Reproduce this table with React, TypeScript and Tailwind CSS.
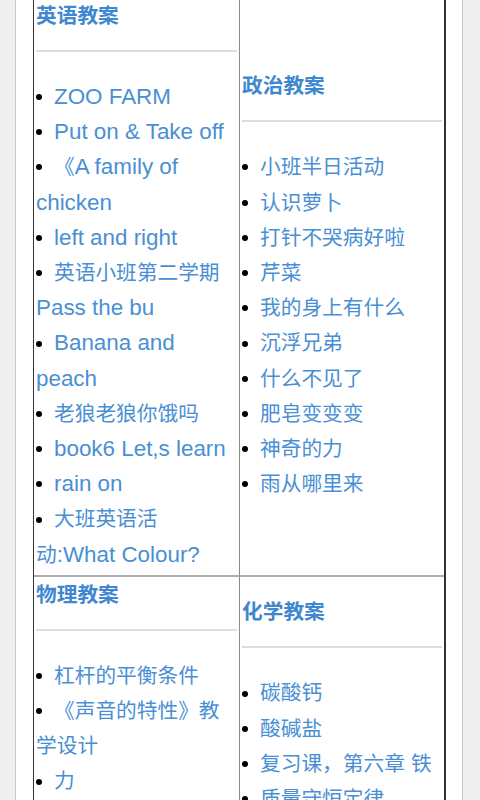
import React from "react";

const CJK = /([\u3000-\u303f\u3400-\u9fff\uff00-\uffef]+)/;

function Mixed({ text }: { text: string }) {
  return (
    <>
      {text.split(CJK).map((part, i) =>
        CJK.test(part) ? (
          <span key={i} className="text-[20.7px]">
            {part}
          </span>
        ) : (
          part
        )
      )}
    </>
  );
}

type Section = { title: string; items: string[] };

const rows: [Section, Section][] = [
  [
    {
      title: "英语教案",
      items: [
        "ZOO FARM",
        "Put on & Take off",
        "《A family of chicken",
        "left and right",
        "英语小班第二学期 Pass the bu",
        "Banana and peach",
        "老狼老狼你饿吗",
        "book6 Let,s learn",
        "rain on",
        "大班英语活动:What Colour?",
      ],
    },
    {
      title: "政治教案",
      items: [
        "小班半日活动",
        "认识萝卜",
        "打针不哭病好啦",
        "芹菜",
        "我的身上有什么",
        "沉浮兄弟",
        "什么不见了",
        "肥皂变变变",
        "神奇的力",
        "雨从哪里来",
      ],
    },
  ],
  [
    {
      title: "物理教案",
      items: ["杠杆的平衡条件", "《声音的特性》教学设计", "力", "光的反射", "浮力"],
    },
    {
      title: "化学教案",
      items: ["碳酸钙", "酸碱盐", "复习课，第六章 铁", "质量守恒定律", "溶液"],
    },
  ],
];

function Cell({ section, left, last }: { section: Section; left: boolean; last: boolean }) {
  return (
    <div
      className={`flex flex-col justify-center px-[2px] pt-[3px] pb-[3px] ${
        left ? "border-r border-[#8a8a8a]" : ""
      } ${last ? "" : "border-b-2 border-b-[#adadad]"}`}
    >
      <h3 className="mt-[2px] mb-[21px] text-[20.7px] leading-[26px] font-bold text-[#3f88cf]">
        {section.title}
      </h3>
      <div className="h-[2px] bg-[#dedede]" />
      <ul className="mt-[27px] pr-[2px]">
        {section.items.map((item) => (
          <li key={item} className="text-[22.4px] leading-[35.2px] text-[#4a8fd4]">
            <span className="inline-block w-[18px] align-middle">
              <span className="mb-[2px] block h-[6px] w-[6px] rounded-full bg-black" />
            </span>
            <Mixed text={item} />
          </li>
        ))}
      </ul>
    </div>
  );
}

export default function App() {
  return (
    <div
      className="min-h-screen overflow-hidden bg-[#efefef] pl-[15px] pr-[17px]"
      style={{ fontFamily: '"Liberation Sans", "Noto Sans CJK SC", sans-serif' }}
    >
      <div className="min-h-screen border-l border-[#cacaca] border-r border-r-[#c0c4cc] bg-white pl-[17px] pr-[16px]">
        <div className="-mt-[4px] grid grid-cols-[206px_1fr] border-t-2 border-l border-r-2 border-[#333]">
          {rows.map(([a, b], i) => (
            <React.Fragment key={i}>
              <Cell section={a} left last={i === rows.length - 1} />
              <Cell section={b} left={false} last={i === rows.length - 1} />
            </React.Fragment>
          ))}
        </div>
      </div>
    </div>
  );
}
